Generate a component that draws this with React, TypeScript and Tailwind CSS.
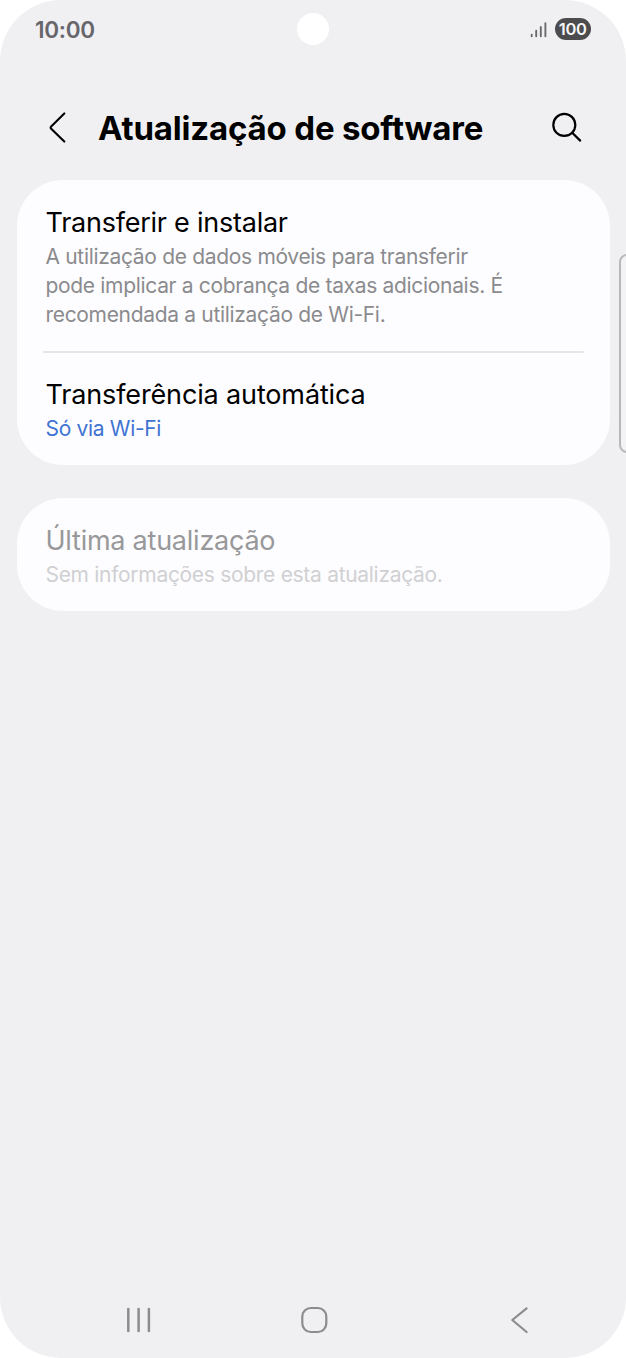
import type { ReactNode } from "react";

function StatusBar() {
  return (
    <div className="relative flex h-[58px] items-center justify-between pr-[35px] pl-[35px]">
      <span className="pt-px text-[22.5px] leading-[58px] font-semibold tracking-[-0.3px] text-[#66666a]">10:00</span>
      <span className="absolute top-[13px] left-[297px] size-8 rounded-full bg-white" />
      <div className="flex items-center gap-2">
        <svg width="17" height="17" viewBox="0 0 17 17" fill="none" stroke="#6a6a6d" strokeWidth="1.9" strokeLinecap="round">
          <path d="M1.7 13.6V15.3M6.2 9.8V15.3M10.8 5.9V15.3M15.4 2.2V15.3" />
        </svg>
        <span className="flex h-[22px] w-[36.5px] items-center justify-center rounded-full bg-[#4c4c4e] text-[16.5px] font-semibold tracking-[-0.3px] text-[#f6f6f8]">
          100
        </span>
      </div>
    </div>
  );
}

function Header() {
  return (
    <header className="flex h-[122px] items-center pt-[17px] pr-[43px] pl-[47px]">
      <svg width="20" height="32" viewBox="0 0 20 32" fill="none" stroke="#000" strokeWidth="2.1" strokeLinecap="round" strokeLinejoin="round">
        <path d="M17.3 1.4L4.2 14.4Q3 15.6 4.2 16.8L17.3 29.6" />
      </svg>
      <h1 className="ml-[31px] flex-1 pt-px text-[33px] leading-[44px] font-bold tracking-[-0.18px] whitespace-nowrap text-black">
        Atualização de software
      </h1>
      <svg width="32" height="32" viewBox="0 0 32 32" fill="none" stroke="#000" strokeWidth="2.2" strokeLinecap="round">
        <circle cx="13.3" cy="12.9" r="11" />
        <path d="M21.2 20.8L29.2 28.6" />
      </svg>
    </header>
  );
}

function Card({ children }: { children: ReactNode }) {
  return <section className="mx-[16.5px] rounded-[46px] bg-[#fdfdff] px-[26px] py-[24.5px]">{children}</section>;
}

export default function App() {
  return (
    <div className="h-[1358px] w-[626px] bg-white">
      <main className="relative flex h-full flex-col overflow-hidden rounded-[61px] bg-[#f0f0f3] font-['Inter','Liberation_Sans',sans-serif]">
        <StatusBar />
        <Header />
        <div className="-mt-[0.5px] flex flex-col gap-[33px]">
          <Card>
            <div className="px-[3px]">
              <h2 className="pt-px text-[27px] leading-[36px] font-[370] tracking-[-0.24px] whitespace-nowrap text-black">Transferir e instalar</h2>
              <p className="mt-px text-[21px] leading-[29px] font-[380] tracking-[-0.32px] whitespace-nowrap text-[#8b8b8e]">
                A utilização de dados móveis para transferir
                <br />
                pode implicar a cobrança de taxas adicionais. É
                <br />
                recomendada a utilização de Wi-Fi.
              </p>
            </div>
            <div className="mt-[22px] mb-[23px] h-[2px] rounded-full bg-[#e6e6e8]" />
            <div className="px-[3px]">
              <h2 className="pt-px text-[27px] leading-[36px] font-[370] tracking-[-0.14px] whitespace-nowrap text-black">Transferência automática</h2>
              <p className="mt-px -mb-[3px] text-[21px] leading-[29px] font-[380] tracking-[-0.32px] whitespace-nowrap text-[#3f73d2]">Só via Wi-Fi</p>
            </div>
          </Card>
          <Card>
            <div className="px-[3px]">
              <h2 className="pt-px text-[27px] leading-[36px] font-[370] tracking-[-0.24px] whitespace-nowrap text-[#98989a]">Última atualização</h2>
              <p className="mt-px -mb-[3px] text-[21px] leading-[29px] font-[380] tracking-[-0.3px] whitespace-nowrap text-[#d0d0d2]">
                Sem informações sobre esta atualização.
              </p>
            </div>
          </Card>
        </div>
        <nav className="mt-auto flex h-[78px] items-center pt-px pl-[124px]">
          <svg width="30" height="30" viewBox="0 0 30 30" fill="none" stroke="#8c8c8f" strokeWidth="2.5" strokeLinecap="round">
            <path d="M4.3 4V26M14.6 4V26M24.9 4V26" />
          </svg>
          <svg className="ml-[144.5px]" width="30" height="30" viewBox="0 0 30 30" fill="none" stroke="#8c8c8f" strokeWidth="2.2">
            <rect x="3.3" y="3" width="24" height="24" rx="8.5" />
          </svg>
          <svg className="ml-[181px]" width="20" height="30" viewBox="0 0 20 30" fill="none" stroke="#8c8c8f" strokeWidth="2.2" strokeLinecap="round" strokeLinejoin="round">
            <path d="M16.6 3.4L2.3 15L16.6 27" />
          </svg>
        </nav>
        <div className="absolute top-[254px] -right-[10px] h-[198.5px] w-[17.5px] rounded-[8px] border-2 border-[#b8b8ba] bg-[#f3f3f6]" />
      </main>
    </div>
  );
}
